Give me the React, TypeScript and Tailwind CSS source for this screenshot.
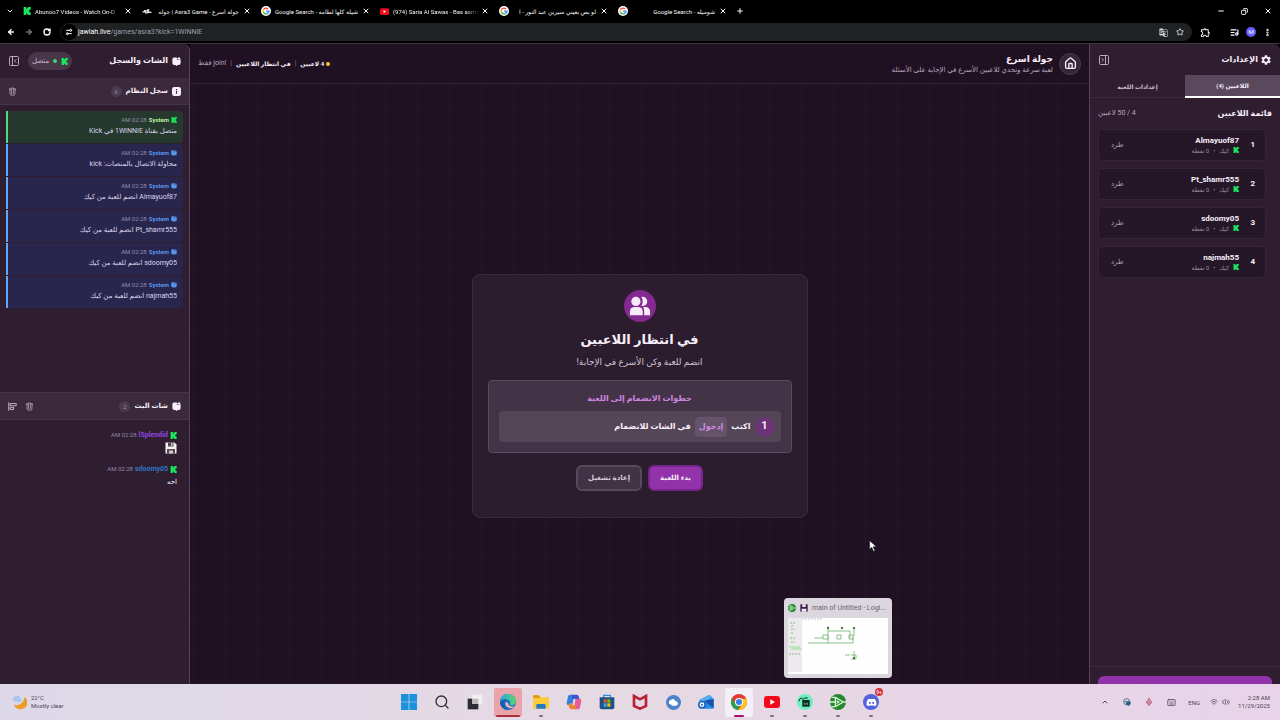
import type { ReactNode } from "react";
import {
  ChevronDown,
  ChevronUp,
  ArrowLeft,
  ArrowRight,
  RotateCw,
  Settings2,
  Star,
  ListMusic,
  EllipsisVertical,
  Minus,
  Copy,
  X,
  Plus,
  House,
  PanelLeftClose,
  PanelRightClose,
  AlignStartVertical,
  Search,
  Mic,
  Keyboard,
  Wifi,
  Volume2,
} from "lucide-react";
import { FaDiscord } from "react-icons/fa";
import { MdGTranslate, MdOutlineExtension, MdSettings } from "react-icons/md";
import { HiOutlineTrash } from "react-icons/hi2";

interface Tab {
  title: string;
  icon: ReactNode;
  rtl?: boolean;
}

interface LogEntry {
  text: string;
  kick?: boolean;
}

function KickIcon({ className = "size-2" }: { className?: string }) {
  return (
    <svg viewBox="0 0 24 24" className={`shrink-0 ${className}`} fill="#19e65c">
      <path d="M2 0h8v5h2V2.5h3V0h8v8h-3v2.5h-2.5v3H20V16h3v8h-8v-2.5h-3V19h-2v5H2z" />
    </svg>
  );
}

function GoogleIcon() {
  return (
    <svg viewBox="0 0 24 24" className="size-[10px] shrink-0">
      <circle cx="12" cy="12" r="12" fill="#fff" />
      <g fill="none" strokeWidth="3.4">
        <path d="M17 7.2A7 7 0 0 0 6 8.5" stroke="#ea4335" />
        <path d="M6 8.5a7 7 0 0 0 0 7" stroke="#fbbc05" />
        <path d="M6 15.5a7 7 0 0 0 10.6 1.7" stroke="#34a853" />
        <path d="M16.6 17.2A7 7 0 0 0 19 12.3h-7" stroke="#4285f4" />
      </g>
    </svg>
  );
}

function YoutubeIcon({ className }: { className: string }) {
  return (
    <svg viewBox="0 0 24 18" className={`shrink-0 ${className}`}>
      <rect width="24" height="18" rx="4.5" fill="#f00a1c" />
      <path d="M9.5 5v8l7-4z" fill="#fff" />
    </svg>
  );
}

function ChatIcon({ className = "size-[9px]" }: { className?: string }) {
  return (
    <svg viewBox="0 0 24 24" className={`shrink-0 ${className}`} fill="currentColor">
      <path d="M5 1h8v4.5C13 7 14 8 15.500 8 17 8 18 7 18 6h5v10a5 5 0 0 1-5 5h-3l-3 3-3-3H6a5 5 0 0 1-5-5V5a4 4 0 0 1 4-4z" />
      <circle cx="19" cy="3.500" r="3" />
      <circle cx="15.500" cy="4.500" r="2" />
    </svg>
  );
}

function InfoIcon() {
  return (
    <svg viewBox="0 0 24 24" className="size-[9px] shrink-0">
      <rect width="24" height="24" rx="6" fill="#f7eefa" />
      <path d="M12 10v8M12 5v3" stroke="#3a2a3c" strokeWidth="3" />
    </svg>
  );
}

function WaveIcon() {
  return (
    <svg viewBox="0 0 24 12" className="h-[5px] w-[10px] shrink-0" fill="none" stroke="#ddd" strokeWidth="3">
      <path d="M1 7h5V4h3v5h4V2h3v6h7" />
    </svg>
  );
}

const tabs: Tab[] = [
  { title: "Abunoo7 Videos - Watch On-D", icon: <KickIcon /> },
  { title: "جولة اسرع - Asra3 Game | جوله", icon: <WaveIcon />, rtl: true },
  { title: "شيلة كلها لطامه - Google Search", icon: <GoogleIcon />, rtl: true },
  { title: "(974) Saria Al Sawas - Bas asma", icon: <YoutubeIcon className="h-[7px] w-[9px]" /> },
  { title: "لو بص بعيني سيرين عبد النور - ا", icon: <GoogleIcon />, rtl: true },
  { title: "شوميله - Google Search", icon: <GoogleIcon />, rtl: true },
];

const players = ["Almayuof87", "Pt_shamr555", "sdoomy05", "najmah55"];

const logEntries: LogEntry[] = [
  { text: "متصل بقناة 1WINNIE في Kick", kick: true },
  { text: "محاولة الاتصال بالمنصات: kick" },
  { text: "Almayuof87 انضم للعبة من كيك" },
  { text: "Pt_shamr555 انضم للعبة من كيك" },
  { text: "sdoomy05 انضم للعبة من كيك" },
  { text: "najmah55 انضم للعبة من كيك" },
];

function BrowserBar() {
  return (
    <header className="shrink-0 bg-black font-['Roboto','DejaVu_Sans',sans-serif] text-white">
      <div className="flex h-[22px] items-center">
        <button className="flex w-5 justify-center" aria-label="Search tabs">
          <ChevronDown className="size-2" strokeWidth={3} />
        </button>
        {tabs.map((tab) => (
          <div key={tab.title} className="flex w-[119px] items-center gap-0.5 pr-[7px] pl-[3px]">
            {tab.icon}
            <span
              dir={tab.rtl ? "rtl" : "ltr"}
              className={`min-w-0 flex-1 overflow-hidden px-0.5 text-[6px] whitespace-nowrap text-gray-100 ${
                tab.rtl ? "" : "mask-r-from-85%"
              }`}
            >
              {tab.title}
            </span>
            <button aria-label="Close tab">
              <X className="size-2" strokeWidth={3} />
            </button>
          </div>
        ))}
        <button className="ml-0.5" aria-label="New tab">
          <Plus className="size-2" strokeWidth={3} />
        </button>
        <div className="ml-auto flex items-center gap-4 pr-2">
          <button aria-label="Minimize"><Minus className="size-2" strokeWidth={3} /></button>
          <button aria-label="Restore"><Copy className="size-[7px] -scale-x-100" strokeWidth={3} /></button>
          <button aria-label="Close"><X className="size-2" strokeWidth={3} /></button>
        </div>
      </div>
      <div className="flex h-[21px] items-start pt-px">
        <div className="flex h-[18px] w-[60px] items-center gap-2.5 pl-[7px]">
          <button aria-label="Back"><ArrowLeft className="size-2" strokeWidth={4} /></button>
          <button aria-label="Forward" className="text-gray-500"><ArrowRight className="size-2" strokeWidth={4} /></button>
          <button aria-label="Reload"><RotateCw className="size-2" strokeWidth={4} /></button>
        </div>
        <div className="flex h-[18px] flex-1 items-center rounded-full bg-[#202122] pr-2 pl-px">
          <button className="flex size-4 items-center justify-center rounded-full bg-black" aria-label="Site information">
            <Settings2 className="size-2 -scale-y-100" strokeWidth={3} />
          </button>
          <a href="#" className="ml-px text-[7px] text-gray-400">
            <span className="text-white">jawlah.live</span>/games/asra3?kick=1WINNIE
          </a>
          <div className="ml-auto flex items-center gap-2 text-gray-300">
            <button aria-label="Translate"><MdGTranslate className="size-[9px]" /></button>
            <button aria-label="Bookmark"><Star className="size-2" strokeWidth={3} /></button>
          </div>
        </div>
        <div className="flex h-[18px] w-[88px] items-center justify-between pr-2 pl-2">
          <button aria-label="Extensions"><MdOutlineExtension className="size-[11px]" /></button>
          <button aria-label="Media" className="ml-3"><ListMusic className="size-[9px]" strokeWidth={3} /></button>
          <button className="size-[10px] rounded-full bg-indigo-500 text-[6px] leading-[10px]">M</button>
          <button aria-label="Menu"><EllipsisVertical className="size-[9px]" strokeWidth={4} /></button>
        </div>
      </div>
    </header>
  );
}

function SettingsPanel() {
  return (
    <aside className="flex w-[191px] shrink-0 flex-col rounded-tr-md border-l border-[#55435a] bg-[#2f1e30]">
      <div className="flex h-[31px] items-center justify-between px-2">
        <h2 className="flex items-center gap-0.5 text-[8px] font-bold">
          <MdSettings className="size-3" />
          الإعدادات
        </h2>
        <button aria-label="Collapse settings" className="text-[#b9a9bd]">
          <PanelRightClose className="size-3" strokeWidth={2} />
        </button>
      </div>
      <div className="flex h-[23px] shrink-0 border-b border-[#3b2a3e] text-[6px] font-bold">
        <button className="h-[23px] flex-1 border-b-2 border-white bg-[#5a485d]">اللاعبين (4)</button>
        <button className="flex-1 text-[#cbbdce]">إعدادات اللعبة</button>
      </div>
      <div className="flex flex-1 flex-col px-2">
        <div className="flex h-[31px] items-center justify-between">
          <h3 className="text-[8px] font-bold">قائمة اللاعبين</h3>
          <span className="text-[7px] text-[#b9a9bd]">4 / 50 لاعبين</span>
        </div>
        <ul className="flex flex-col gap-[7px] pr-1.5">
          {players.map((name, i) => (
            <li
              key={name}
              className="flex h-8 items-center rounded border border-[#352437] bg-[#251727] pr-2.5 pl-3"
            >
              <span className="w-4 text-[8px] font-bold">{i + 1}</span>
              <div>
                <p className="text-[8px] leading-[10px] font-bold">{name}</p>
                <p className="flex items-center gap-1 text-[6px] leading-[9px] text-[#9c8ca0]">
                  <KickIcon className="size-1.5" />
                  <span>كيك</span>
                  <span>•</span>
                  <span>0 نقطة</span>
                </p>
              </div>
              <button className="mr-auto text-[7px] text-[#b9a9bd]">طرد</button>
            </li>
          ))}
        </ul>
      </div>
      <div className="border-t border-[#3b2a3e] px-2 pt-[9px]">
        <button aria-label="حفظ" className="block h-2 w-full rounded-t-md bg-[#9333ab]" />
      </div>
    </aside>
  );
}

function WaitingCard() {
  return (
    <section className="flex w-[336px] flex-col items-center rounded-lg border border-[#392a3c] bg-[#2c1d2e] px-[15px] pt-[15px] pb-[26px]">
      <div className="flex size-8 items-center justify-center rounded-full bg-[#84298f]">
        <svg viewBox="0 0 24 24" className="size-[22px]" fill="#f8ecfb">
          <circle cx="7.500" cy="7" r="5" />
          <path d="M13.500 2.200a5 5 0 1 1 0 9.600c2-2.600 2-7 0-9.600z" />
          <path d="M1 18a5 5 0 0 1 5-5h4a5 5 0 0 1 5 5v4H1z" />
          <path d="M15.500 13H18a5 5 0 0 1 5 5v4h-6.500v-5c0-1.500-.3-2.800-1-4z" />
        </svg>
      </div>
      <h2 className="mt-2 text-[13px] leading-5 font-bold">في انتظار اللاعبين</h2>
      <p className="mt-1 text-[9px] leading-4 text-[#cfc2d2]">انضم للعبة وكن الأسرع في الإجابة!</p>
      <div className="mt-2.5 w-full rounded border border-[#5c4b5f] bg-[#433346] p-2.5">
        <h3 className="text-center text-[8px] leading-4 font-bold text-[#cf86e0]">
          خطوات الانضمام إلى اللعبة
        </h3>
        <div className="mt-1 flex h-[31px] items-center rounded bg-[#544557] px-1.5 text-[8px] font-bold">
          <span className="flex size-5 items-center justify-center rounded-full bg-[#6c3379] text-[11px]">1</span>
          <span className="mr-1">اكتب</span>
          <span className="mx-1 rounded bg-[#65536a] px-1 py-1 text-[#d08ce2]">إدخول</span>
          <span>في الشات للانضمام</span>
        </div>
      </div>
      <div className="mt-3 flex gap-1.5 text-[7px] font-bold">
        <button className="h-[26px] w-[55px] rounded-md border-2 border-[#75258a] bg-[#9333ab]">بدء اللعبة</button>
        <button className="h-[26px] w-[66px] rounded-md border-2 border-[#58485b] bg-[#413344] text-[#d8cbda]">
          إعادة تشغيل
        </button>
      </div>
    </section>
  );
}

function GameArea() {
  return (
    <main className="flex min-w-0 flex-1 flex-col bg-[#1f1022]">
      <div className="flex h-10 shrink-0 items-center justify-between border-b border-[#34223a] px-2">
        <div className="flex items-center gap-1.5">
          <a
            href="#"
            aria-label="الرئيسية"
            className="flex size-[22px] items-center justify-center rounded-full border border-[#4c3a50] bg-[#362639]"
          >
            <House className="size-[13px]" strokeWidth={2.5} />
          </a>
          <div>
            <h1 className="text-[9px] leading-3 font-bold">جولة اسرع</h1>
            <p className="text-[7px] leading-[10px] text-[#b9a9bd]">
              لعبة سرعة وتحدي للاعبين الأسرع في الإجابة على الأسئلة
            </p>
          </div>
        </div>
        <div className="flex items-center gap-1 text-[6px]">
          <span className="flex items-center gap-0.5 font-bold">
            <i className="size-1 rounded-full bg-[#f5c531]" />4 لاعبين
          </span>
          <span className="text-[7px] text-[#8f7f93]">|</span>
          <span className="font-bold">في انتظار اللاعبين</span>
          <span className="text-[7px] text-[#8f7f93]">|</span>
          <span className="text-[7px] text-[#b9a9bd]">!join فقط</span>
        </div>
      </div>
      <div className="flex flex-1 items-center justify-center bg-[linear-gradient(#241427_1px,transparent_1px),linear-gradient(90deg,#28172c_1px,transparent_1px)] bg-size-[32px_32px] bg-position-[3px_23px] pt-6">
        <WaitingCard />
      </div>
    </main>
  );
}

function ChatPanel() {
  return (
    <aside className="flex w-[190px] shrink-0 flex-col rounded-tr-md border-r border-[#55435a] bg-[#2f1e30]">
      <div className="flex h-[34px] items-center justify-between px-2">
        <h2 className="flex items-center gap-1 text-[8px] font-bold">
          <ChatIcon />
          الشات والسجل
        </h2>
        <div className="flex items-center gap-2">
          <span className="flex h-[18px] items-center gap-1 rounded-full bg-[#483749] px-1 text-[7px] text-[#cbbdce]">
            <KickIcon className="size-[7px]" />
            <i className="size-1 rounded-full bg-[#3fd17f]" />
            متصل
          </span>
          <button aria-label="Collapse chat" className="text-[#b9a9bd]">
            <PanelLeftClose className="size-3" strokeWidth={2} />
          </button>
        </div>
      </div>
      <div className="flex h-[27px] items-center border-b border-[#463549] bg-[#3a2a3c] px-2">
        <h3 className="flex items-center gap-1 text-[7px] font-bold">
          <InfoIcon />
          سجل النظام
        </h3>
        <span className="mr-1 flex size-[11px] items-center justify-center rounded-full bg-[#4c3b4e] text-[6px] text-[#9c8c9f]">6</span>
        <button aria-label="Clear log" className="mr-auto text-[#b9a9bd]">
          <HiOutlineTrash className="size-[9px]" strokeWidth={2} />
        </button>
      </div>
      <ul className="flex flex-1 flex-col p-1.5">
        {logEntries.map((entry) => (
          <li key={entry.text} className="shrink-0 border-b border-[#2f1e30]">
            <div
              className={`h-8 rounded-r border-l-2 px-1.5 pt-[3px] ${
                entry.kick ? "border-[#4ade80] bg-[#26392f]" : "border-[#60a5fa] bg-[#29264e]"
              }`}
            >
              <div className="flex items-center gap-0.5 text-[6px] leading-[11px]">
                {entry.kick ? <KickIcon className="size-1.5" /> : <ChatIcon className="size-1.5 text-[#5796e8]" />}
                <b className={entry.kick ? "text-[#bdf2a0]" : "text-[#5796e8]"}>System</b>
                <span className="text-[#968ba5]">02:28 AM</span>
              </div>
              <p className="text-[7px] leading-3 text-[#ddd5ea]">{entry.text}</p>
            </div>
          </li>
        ))}
      </ul>
      <div className="flex h-7 items-center border-y border-[#463549] bg-[#3a2a3c] px-2">
        <h3 className="flex items-center gap-1 text-[7px] font-bold">
          <ChatIcon />
          شات البث
        </h3>
        <span className="mr-1 flex size-[11px] items-center justify-center rounded-full bg-[#4c3b4e] text-[6px] text-[#9c8c9f]">2</span>
        <div className="mr-auto flex items-center gap-2 text-[#b9a9bd]">
          <button aria-label="Clear chat"><HiOutlineTrash className="size-[9px]" strokeWidth={2} /></button>
          <button aria-label="Align"><AlignStartVertical className="size-[9px]" strokeWidth={3} /></button>
        </div>
      </div>
      <div className="h-[264px] px-3 pt-2.5">
        <ChatLine name="lSplendid" nameClass="text-[#9146e0]">
          <svg viewBox="0 0 24 24" className="size-3">
            <path d="M1 1h18l4 4v18H1z" fill="#f4f1f0" />
            <path d="M6 1h11v8H6zM4 14h16v9H4z" fill="#52484e" />
            <path d="M12 2h3v6h-3zM8 17h8v6H8z" fill="#cfc7ca" />
          </svg>
        </ChatLine>
        <ChatLine name="sdoomy05" nameClass="text-[#2f74c4]">احه</ChatLine>
      </div>
    </aside>
  );
}

function ChatLine({ name, nameClass, children }: { name: string; nameClass: string; children: ReactNode }) {
  return (
    <div className="mb-2">
      <div className="flex items-center gap-0.5 text-[7px] leading-[10px]">
        <KickIcon className="size-[7px]" />
        <b className={nameClass}>{name}</b>
        <span className="text-[6px] text-[#968ba5]">02:28 AM</span>
      </div>
      <div className="flex h-4 items-center text-[7px]">{children}</div>
    </div>
  );
}

function EdgeIcon() {
  return (
    <svg viewBox="0 0 24 24" className="size-4">
      <defs>
        <linearGradient id="edgeTop" x1="0" x2="1">
          <stop offset="0" stopColor="#2aa6e8" />
          <stop offset="1" stopColor="#5ad860" />
        </linearGradient>
      </defs>
      <circle cx="12" cy="12" r="12" fill="#1670c4" />
      <path d="M0 12a12 12 0 0 1 24-1c0 4-3 6-6 6-3.500 0-4-1.500-3-3 1-2-.5-5-4-5-5 0-10 3-11 3z" fill="url(#edgeTop)" />
      <path d="M8 13c-1 6 5 9 10 8 2-.5 3-1.500 4-3-4 2-9 1-10-4-.4-2-2.500-3-4-1z" fill="#f2b3b8" />
      <path d="M0 12c2-5 9-6 12-3-5 0-7 5-5 9 1 3 4 5 6 6C6 24.500 0 19 0 12z" fill="#1a55a8" opacity=".75" />
    </svg>
  );
}

function ChromeIcon() {
  return (
    <svg viewBox="0 0 24 24" className="size-4">
      <circle cx="12" cy="12" r="12" fill="#e23b30" />
      <path d="M1.600 6 6.800 15l5.200 3-1 6A12 12 0 0 1 1.600 6z" fill="#28a24b" />
      <path d="M12 7h10.900A12 12 0 0 1 11 24l6-9z" fill="#fbc81b" />
      <circle cx="12" cy="12" r="6" fill="#fff" />
      <circle cx="12" cy="12" r="4.600" fill="#3b7eea" />
    </svg>
  );
}

function LogisimIcon({ className }: { className: string }) {
  return (
    <svg viewBox="0 0 24 24" className={`shrink-0 ${className}`}>
      <circle cx="12" cy="12" r="12" fill="#23882d" />
      <path d="M3 5h5l12 7-12 7H3M8 5v14M0 12h8M20 12h4" fill="none" stroke="#d7f3d2" strokeWidth="2" />
      <path d="M10 9v6l5-3z" fill="#d7f3d2" />
    </svg>
  );
}

const taskbarApps: { name: string; icon: ReactNode; running?: boolean; box?: string; bar?: string }[] = [
  {
    name: "Start",
    icon: (
      <svg viewBox="0 0 24 24" className="size-4" fill="#1b93dc">
        <path d="M0 0h11.500v11.500H0zM12.500 0H24v11.500H12.500zM0 12.500h11.500V24H0zM12.500 12.500H24V24H12.500z" />
      </svg>
    ),
  },
  { name: "Search", icon: <Search className="size-4 text-[#303036]" /> },
  {
    name: "Task view",
    icon: (
      <svg viewBox="0 0 24 24" className="size-4">
        <path d="M1 7h16v16H1z" fill="#2d2c30" />
        <path d="M8 1h15v14H8z" fill="#f2eff2" />
        <path d="M8 7h9v8H8z" fill="#bdb9be" />
      </svg>
    ),
  },
  { name: "Edge", icon: <EdgeIcon />, box: "bg-[#e9a3aa]", bar: "w-6 bg-[#a92d3c]" },
  {
    name: "File Explorer",
    running: true,
    icon: (
      <svg viewBox="0 0 24 24" className="size-4">
        <path d="M0 2h9l3 3h12v17H0z" fill="#fbcb3c" />
        <path d="M0 2h9l2 4H0z" fill="#dd9a13" />
        <path d="M5 22v-5a2 2 0 0 1 2-2h10a2 2 0 0 1 2 2v5z" fill="#2476c8" />
      </svg>
    ),
  },
  {
    name: "Copilot",
    icon: (
      <svg viewBox="0 0 24 24" className="size-4" fill="none" strokeWidth="6" strokeLinejoin="round">
        <path d="M9 4 7 14H4L6 4z" stroke="#2f7fe0" />
        <path d="M9 4h7l2 6" stroke="#3a55ce" />
        <path d="m15 20 2-10h3l-2 10z" stroke="#e85a9a" />
        <path d="M15 20H8l-2-6" stroke="#f0813c" />
      </svg>
    ),
  },
  {
    name: "Store",
    icon: (
      <svg viewBox="0 0 24 24" className="size-4">
        <path d="M7 6V2h10v4" fill="none" stroke="#2b8fd8" strokeWidth="2" />
        <path d="M1 5h22v15a3 3 0 0 1-3 3H4a3 3 0 0 1-3-3z" fill="#1c5286" />
        <path d="M7 8h4.500v5H7z" fill="#f25022" />
        <path d="M12.500 8H17v5h-4.500z" fill="#7fba00" />
        <path d="M7 14h4.500v5H7z" fill="#2fa8ee" />
        <path d="M12.500 14H17v5h-4.500z" fill="#ffb900" />
      </svg>
    ),
  },
  {
    name: "McAfee",
    icon: (
      <svg viewBox="0 0 24 24" className="size-4" fill="none" stroke="#b72238" strokeWidth="4">
        <path d="M3 3v15l9 4 9-4V3l-9 5z" />
      </svg>
    ),
  },
  {
    name: "Cloud",
    icon: (
      <svg viewBox="0 0 24 24" className="size-[15px]">
        <circle cx="12" cy="12" r="12" fill="#4b84cc" />
        <path d="M8 15a3.500 3.500 0 0 1 0-7 4 4 0 0 1 7 2 3.500 3.500 0 0 1 1 7h-4a4 4 0 0 1-4-2z" fill="#fff" />
      </svg>
    ),
  },
  {
    name: "Outlook",
    icon: (
      <svg viewBox="0 0 24 24" className="size-4">
        <path d="M2 9 17 1l7 7v12a2 2 0 0 1-2 2H8z" fill="#2a8be6" />
        <path d="M2 9 17 1l4 4L8 13z" fill="#58aeee" />
        <path d="m9 10 14 11V8z" fill="#1b4fa8" />
        <circle cx="6" cy="16" r="6" fill="#1764c0" />
        <circle cx="6" cy="16" r="2.500" fill="none" stroke="#fff" strokeWidth="2" />
      </svg>
    ),
  },
  { name: "Chrome", icon: <ChromeIcon />, box: "bg-[#f4eef6]", bar: "w-2.5 bg-[#a8126e]" },
  { name: "YouTube", icon: <YoutubeIcon className="h-3 w-4" />, running: true },
  {
    name: "Camera",
    running: true,
    icon: (
      <svg viewBox="0 0 24 24" className="size-4">
        <circle cx="12" cy="12" r="12" fill="#6df0bd" />
        <path d="M8 9h11v10H8z" fill="#10251d" />
        <path d="M3 11c0-3 2-5 5-5M8 9l3-3h5" fill="none" stroke="#10251d" strokeWidth="1.500" />
        <path d="M11 13h1.500v3H11zM14.500 13H16v3h-1.500z" fill="#6df0bd" />
      </svg>
    ),
  },
  { name: "Logisim", icon: <LogisimIcon className="size-4" />, running: true },
  {
    name: "Discord",
    running: true,
    icon: (
      <span className="relative flex size-4 items-center justify-center rounded-full bg-[#5262dc]">
        <FaDiscord className="size-[11px] text-white" />
        <span className="absolute -top-1.5 left-3 size-2 rounded-full bg-[#d0303c] text-center text-[5px] leading-2 text-white">
          9+
        </span>
      </span>
    ),
  },
];

function Taskbar() {
  return (
    <footer className="grid h-9 shrink-0 grid-cols-[1fr_auto_1fr] items-center bg-linear-to-r from-[#ddd8e8] via-[#e6d9e3] to-[#e8d3e9] font-['Roboto',sans-serif] text-[#4b4652]">
      <div className="flex items-center gap-1 pl-3">
        <svg viewBox="0 0 24 24" className="size-[15px]">
          <path d="M20 3a11 11 0 1 1-17 12c8 3 16-2 17-12z" fill="#ec9d28" />
          <path d="M3 10a4 4 0 0 1 1-7 5 5 0 0 1 9 2 3 3 0 0 1-1 6z" fill="#a7c6f0" />
        </svg>
        <div className="text-[6px] leading-2">
          <p>22°C</p>
          <p>Mostly clear</p>
        </div>
      </div>
      <div className="flex">
        {taskbarApps.map((app) => (
          <button key={app.name} aria-label={app.name} className="flex h-9 w-[33px] items-center justify-center">
            <span className={`relative flex h-[29px] w-7 items-center justify-center rounded-xs ${app.box ?? ""}`}>
              {app.icon}
              {app.bar && <i className={`absolute bottom-0 h-0.5 rounded-full ${app.bar}`} />}
              {app.running && <i className="absolute bottom-0 h-0.5 w-1 rounded-full bg-[#77717c]" />}
            </span>
          </button>
        ))}
      </div>
      <div className="flex items-center justify-end pr-2.5 text-[6px]">
        <ChevronUp className="mr-3.5 size-2" strokeWidth={3} />
        <svg viewBox="0 0 24 24" className="mr-3.5 size-2">
          <circle cx="11" cy="11" r="9" fill="none" stroke="#4c7691" strokeWidth="3" />
          <circle cx="16" cy="16" r="7" fill="#27617f" />
          <path d="M4 11h12" stroke="#4c7691" strokeWidth="3" />
        </svg>
        <Mic className="mr-3.5 size-2 text-[#b15367]" strokeWidth={3} />
        <Keyboard className="mr-3 size-[9px]" />
        <span className="mr-2.5">ENG</span>
        <Wifi className="mr-1 size-2" />
        <Volume2 className="mr-2 size-2" />
        <div className="text-right leading-2">
          <p>2:28 AM</p>
          <p>11/29/2025</p>
        </div>
      </div>
    </footer>
  );
}

function WindowPreview() {
  return (
    <div className="absolute bottom-[42px] left-[784px] w-[108px] rounded-sm bg-[#dcd7df] p-1 font-['Roboto',sans-serif]">
      <div className="flex h-3 items-center gap-1 text-[7px] whitespace-nowrap text-[#68616b]">
        <LogisimIcon className="size-2" />
        <svg viewBox="0 0 24 24" className="size-2 shrink-0">
          <path d="M1 1h22v22H1z" fill="#3b1d44" />
          <path d="M7 1h10v8H7zM5 14h14v9H5z" fill="#f0eaf2" />
        </svg>
        <span>main of Untitled - Logi...</span>
      </div>
      <svg viewBox="0 0 100 56" className="mt-1 block w-full">
        <path d="M0 0h100v56H0z" fill="#fefefe" />
        <path d="M0 0h14v54H0z" fill="#eceaed" />
        <g fill="none" stroke="#72b46e" strokeWidth=".8">
          <path d="M2 5h5M3 8h3M3 11h4M3 15h3M2 20h5M3 24h4M1 36h11" strokeDasharray="2 1" />
          <path d="M1 29h11M3 31h11" stroke="#7fdc79" />
          <path d="M20 25h45v-6M40 8v17M40 13h22v7M26 20h9M66 10v8" />
          <path d="M14 1h20" stroke="#b5b2b8" strokeDasharray="2 1" />
          <path d="M35 17h5v4h-5zM49 17h4v4h-4zM61 17h4v4h-4zM57 37h5M63 37h5v4h-5M66 33v9" />
        </g>
        <path d="M39 9h2v2h-2zM53 9h2v2h-2zM65 9h2v2h-2zM65 39h2v2h-2z" fill="#457942" />
      </svg>
    </div>
  );
}

export default function App() {
  return (
    <div className="relative flex h-screen flex-col overflow-hidden bg-black">
      <BrowserBar />
      <div
        dir="rtl"
        className="flex min-h-0 flex-1 overflow-hidden border-t border-[#42323f] font-['Roboto','DejaVu_Sans',sans-serif] text-[#f8effa]"
      >
        <SettingsPanel />
        <GameArea />
        <ChatPanel />
      </div>
      <Taskbar />
      <WindowPreview />
      <svg viewBox="0 0 12 18" className="absolute top-[540px] left-[869px] h-3 w-2">
        <path d="M1 1v13l3-3 3 6 2-1-3-6h5z" fill="#fff" stroke="#222" strokeWidth=".8" />
      </svg>
    </div>
  );
}
